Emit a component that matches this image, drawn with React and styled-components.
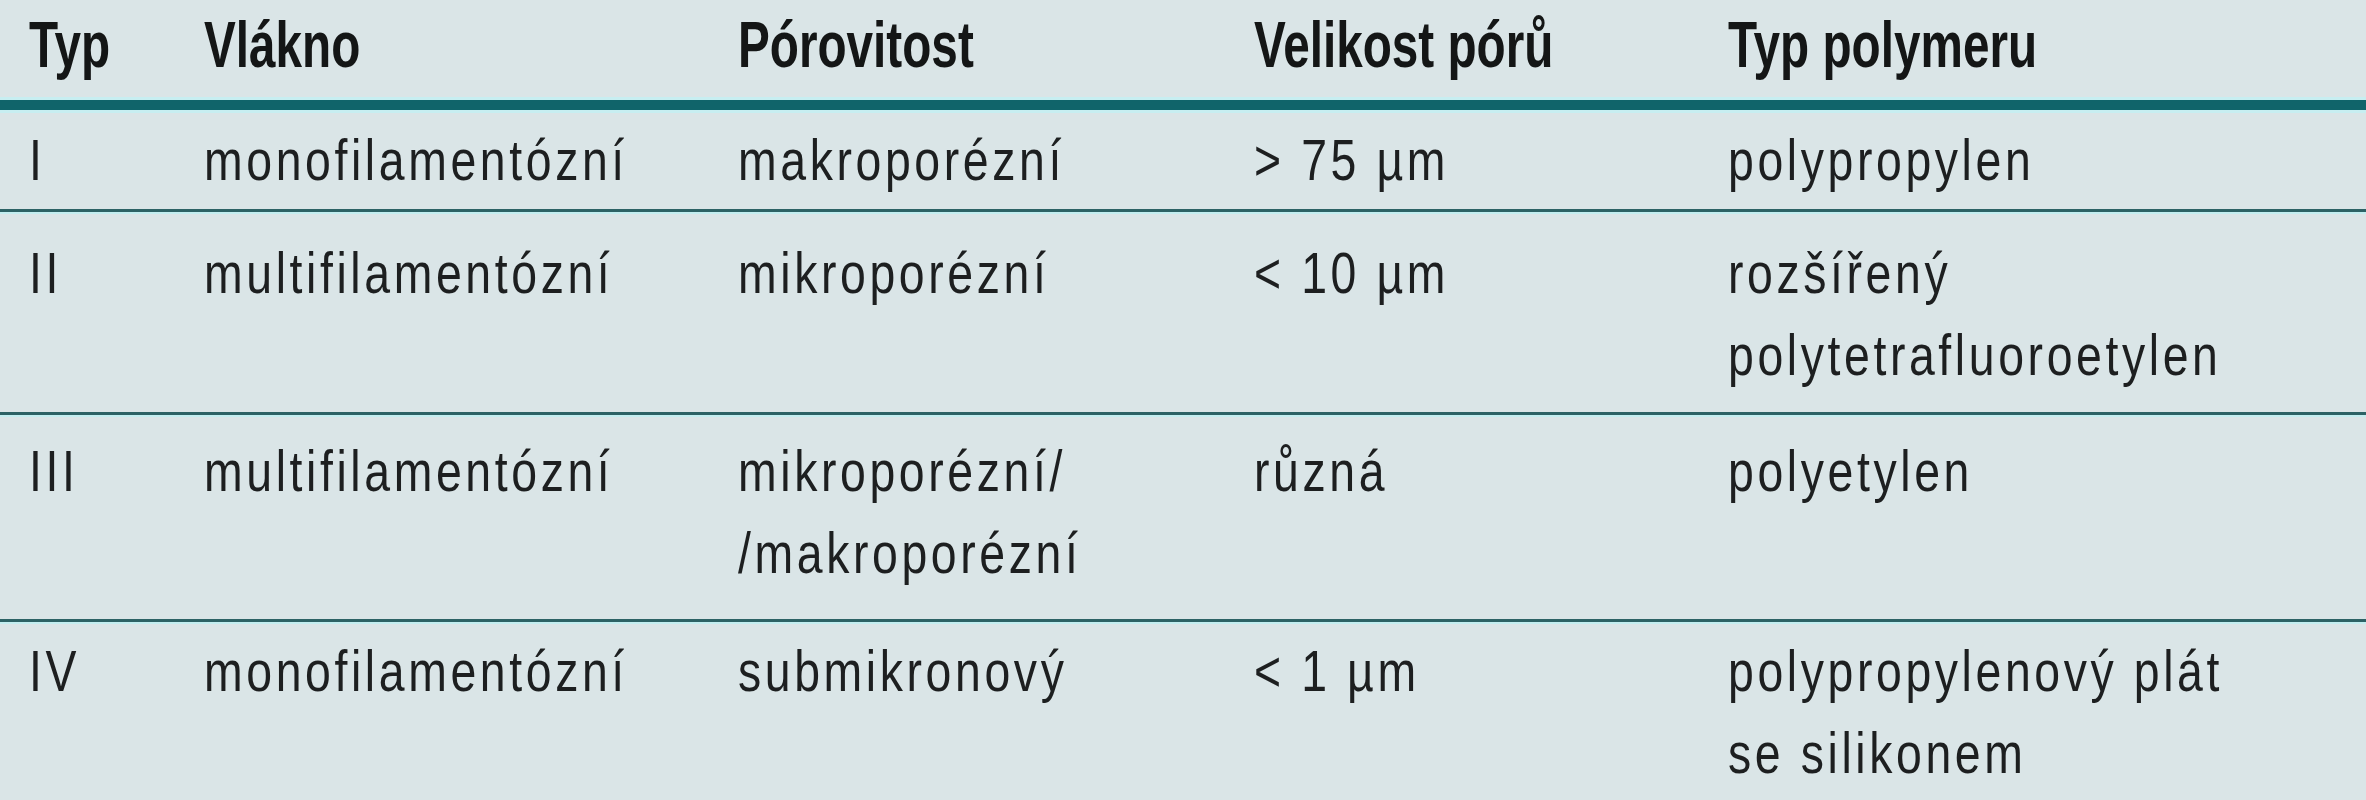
import React from "react";
import styled, { createGlobalStyle } from "styled-components";

const GlobalStyle = createGlobalStyle`
  html, body {
    margin: 0;
    padding: 0;
    background: #dae5e7;
  }
`;

const Table = styled.div`
  width: 100%;
  min-height: 800px;
  background: #dae5e7;
  color: #1d1f20;
  font-family: "Liberation Sans", Arial, sans-serif;
`;

const Row = styled.div`
  display: grid;
  grid-template-columns: 175px 534px 516px 474px 1fr;
  padding: ${(p) => p.$pt || 0}px 0 ${(p) => p.$pb || 0}px 29px;
`;

// the printed face is a condensed grotesque, so squeeze Arial-width glyphs
const HeadCell = styled.div`
  font-size: 64px;
  line-height: 82px;
  font-weight: 700;
  color: #141616;
  white-space: nowrap;
  transform: scaleX(0.745);
  transform-origin: left top;
`;

const Cell = styled.div`
  font-size: 58px;
  line-height: 82px;
  font-weight: 400;
  letter-spacing: 4.5px;
  white-space: nowrap;
  transform: scaleX(0.8);
  transform-origin: left top;
`;

const Line = styled.div``;

const Rule = styled.div`
  height: ${(p) => (p.$thick ? 16 : 5)}px;
  background: ${(p) =>
    p.$thick
      ? "linear-gradient(to bottom, #c7eef1 0 3px, #10646a 3px 13px, #c7eef1 13px 16px)"
      : "linear-gradient(to bottom, #2c6265 0 3px, #c3eef0 3px 5px)"};
`;

const headers = ["Typ", "Vlákno", "Pórovitost", "Velikost pórů", "Typ polymeru"];

const rows = [
  {
    pt: 6,
    pb: 8,
    cells: [["I"], ["monofilamentózní"], ["makroporézní"], ["> 75 µm"], ["polypropylen"]],
  },
  {
    pt: 18,
    pb: 16,
    cells: [
      ["II"],
      ["multifilamentózní"],
      ["mikroporézní"],
      ["< 10 µm"],
      ["rozšířený", "polytetrafluoroetylen"],
    ],
  },
  {
    pt: 13,
    pb: 25,
    cells: [
      ["III"],
      ["multifilamentózní"],
      ["mikroporézní/", "/makroporézní"],
      ["různá"],
      ["polyetylen"],
    ],
  },
  {
    pt: 6,
    pb: 10,
    cells: [
      ["IV"],
      ["monofilamentózní"],
      ["submikronový"],
      ["< 1 µm"],
      ["polypropylenový plát", "se silikonem"],
    ],
  },
];

export default function App() {
  return (
    <>
      <GlobalStyle />
      <Table>
        <Row $pt={4} $pb={11}>
          {headers.map((h) => (
            <HeadCell key={h}>{h}</HeadCell>
          ))}
        </Row>
        <Rule $thick />
        {rows.map((row, i) => (
          <React.Fragment key={i}>
            {i > 0 && <Rule />}
            <Row $pt={row.pt} $pb={row.pb}>
              {row.cells.map((lines, j) => (
                <Cell key={j}>
                  {lines.map((line, k) => (
                    <Line key={k}>{line}</Line>
                  ))}
                </Cell>
              ))}
            </Row>
          </React.Fragment>
        ))}
      </Table>
    </>
  );
}
